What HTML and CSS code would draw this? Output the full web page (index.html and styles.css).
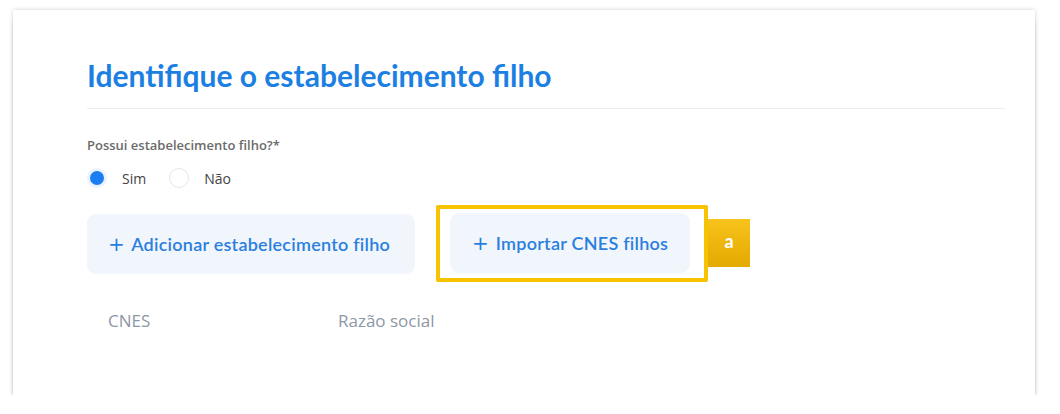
FILE: index.html
```html
<!DOCTYPE html>
<html>
<head>
<meta name="viewport" content="width=device-width, initial-scale=1">
<link rel="stylesheet" href="styles.css">
</head>
<body>

  <div class="card">
    <h2 class="title">Identifique o estabelecimento filho</h2>

    <div class="field">
      <div class="label">Possui estabelecimento filho?*</div>
      <div class="radios">
        <label class="radio"><span class="dot checked"></span>Sim</label>
        <label class="radio"><span class="dot"></span>Não</label>
      </div>
    </div>

    <div class="actions">
      <button class="action"><span class="plus">+</span> Adicionar estabelecimento filho</button>
      <div class="highlight">
        <button class="action"><span class="plus">+</span> Importar CNES filhos</button>
        <span class="tag">a</span>
      </div>
    </div>

    <div class="table-head">
      <span class="col-cnes">CNES</span>
      <span class="col-razao">Razão social</span>
    </div>
  </div>

</body>
</html>
```

FILE: styles.css
```css
* {box-sizing: border-box}

body {
  margin: 0;
  background: #fff;
  font-family: "Lato", "Open Sans", sans-serif;
}

/* main card */
.card {
  width: 1022px;
  height: 385px;
  margin: 10px 0 0 13px;
  padding: 48px 30px 0 74px;
  background: #fff;
  box-shadow: 0 10px 5px -3px rgba(0, 0, 0, 0.55), 0 0 4px rgba(0, 0, 0, 0.2);
}

.title {
  margin: 0;
  padding-bottom: 15px;
  border-bottom: 1px solid #ececec;
  font-size: 30px;
  font-weight: 700;
  color: #1c80e3;
  line-height: 35px;
}

.field {
  margin-top: 27px;
}

.label {
  font-family: "Open Sans", sans-serif;
  font-size: 13px;
  font-weight: 600;
  color: #6b6b6b;
  line-height: 18px;
}

.radios {
  display: flex;
  gap: 23px;
  margin-top: 14px;
}

.radio {
  display: flex;
  align-items: center;
  gap: 15px;
  font-family: "Open Sans", sans-serif;
  font-size: 14px;
  color: #444;
}

.dot {
  width: 20px;
  height: 20px;
  border-radius: 50%;
  border: 1px solid #e6e6e6;
  background: #fff;
}

.dot.checked {
  border: 3px solid #eaf3fd;
  background: #1a7ef0;
}

/* buttons */
.actions {
  display: flex;
  align-items: center;
  gap: 21px;
  margin-top: 17px;
}

.action {
  height: 60px;
  padding: 0 25px 0 21px;
  border: none;
  border-radius: 9px;
  background: #f1f6fd;
  color: #2a7fe0;
  font-family: "Lato", sans-serif;
  font-size: 18px;
  font-weight: 600;
  letter-spacing: 0.25px;
  cursor: pointer;
}

.plus {
  font-family: "DejaVu Sans", sans-serif;
  font-weight: 400;
  font-size: 20px;
  margin-right: 2px;
}

.highlight {
  position: relative;
  padding: 4px 14px 5px 10px;
  border: 4px solid #f7c300;
  border-radius: 2px;
}

.highlight .action {
  padding: 0 22px;
}

.tag {
  position: absolute;
  left: calc(100% + 4px);
  top: 10px;
  width: 42px;
  height: 48px;
  background: linear-gradient(#f8c31c, #e3aa00);
  color: #fff;
  font-weight: 700;
  font-size: 18px;
  text-align: center;
  line-height: 44px;
}

/* table head */
.table-head {
  display: flex;
  margin-top: 27px;
  padding-left: 21px;
  font-family: "Open Sans", sans-serif;
  font-size: 17px;
  color: #8d98a6;
}

.col-cnes {
  width: 230px;
}
```
